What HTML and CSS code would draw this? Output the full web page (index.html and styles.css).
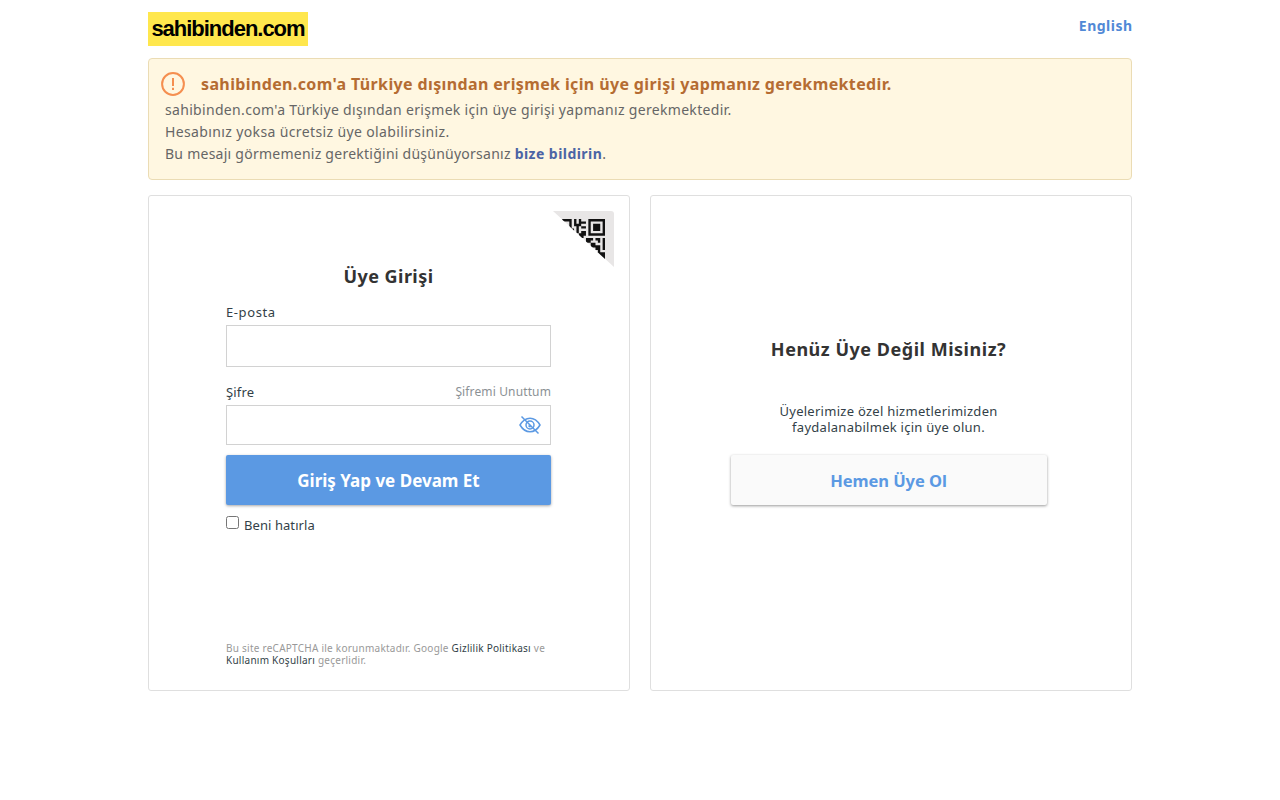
FILE: index.html
```html
<!DOCTYPE html>
<html lang="tr">
<head>
<meta charset="utf-8">
<title>sahibinden.com - Üye Girişi</title>
<link rel="stylesheet" href="styles.css">
</head>
<body>
<div class="page">
  <header class="header">
    <a class="logo"><span class="logo-text">sahibinden.com</span></a>
    <a class="language">English</a>
  </header>
  <section class="notice">
    <div class="notice-head">
      <svg class="notice-icon" width="24" height="24" viewBox="0 0 24 24" fill="none" stroke="#f58f50" stroke-width="2"><circle cx="12" cy="12" r="10.9"/><path d="M12 6v8M12 15.700v2.200"/></svg>
      <h1 class="notice-title">sahibinden.com'a Türkiye dışından erişmek için üye girişi yapmanız gerekmektedir.</h1>
    </div>
    <p class="notice-line first">sahibinden.com'a Türkiye dışından erişmek için üye girişi yapmanız gerekmektedir.</p>
    <p class="notice-line second">Hesabınız yoksa ücretsiz üye olabilirsiniz.</p>
    <p class="notice-line third">Bu mesajı görmemeniz gerektiğini düşünüyorsanız <a class="report">bize bildirin</a>.</p>
  </section>
  <main class="panels">
    <section class="panel login">
      <svg class="qr" width="61" height="56" viewBox="0 0 61 56">
        <defs><clipPath id="fold"><path d="M0 0H58Q61 0 61 3V56Z"/></clipPath><clipPath id="code"><path d="M8.500 8H52V48Z"/></clipPath></defs>
        <path clip-path="url(#fold)" fill="#e8e6e6" d="M0 0H61V56H0Z"/>
        <g clip-path="url(#code)">
          <g transform="translate(9.160 8) scale(2.380)" fill="#111">
            <path fill-rule="evenodd" d="M11 0h7v7h-7zM12 1v5h5v-5zM13 2h3v3h-3z"/>
            <path d="M0 0h4v5h-1v-4h-3zM5 0h1v2h1v-2h1v1h2v1h-2v1h-1v3h-1v-3h-1zM8 3h2v1h-2zM4 4h1v2h-1zM7 6h1v-1h2v2h-1v1h-2zM10 8h3v1h-1v1h-2zM14 8h2v2h-1v-1h-1zM17 8h1v5h-1zM12 10h2v1h2v2h-2v-1h-2zM15 13h1v1h2v4h-1v-2h-1v1h-2v-3h1z"/>
          </g>
        </g>
      </svg>
      <form class="login-form">
        <h2 class="title login-title">Üye Girişi</h2>
        <label class="label email-label" for="email">E-posta</label>
        <input class="field email" id="email" type="text">
        <div class="label-row"><label class="label" for="password">Şifre</label><a class="forgot">Şifremi Unuttum</a></div>
        <div class="password-row">
          <input class="field password" id="password" type="password">
          <svg class="eye" width="22" height="20" viewBox="0 0 22 20" fill="none" stroke="#5b99e3" stroke-width="1.500"><path d="M1 10Q5 3.200 11 3.200T21 10Q17 16.800 11 16.800T1 10Z"/><circle cx="11" cy="10" r="4"/><path d="M9.800 10.500q.2 1.400 1.700 1.100M2.500 1.500l17 17"/></svg>
        </div>
        <button class="submit" type="button">Giriş Yap ve Devam Et</button>
        <label class="remember"><input class="check" type="checkbox"><span>Beni hatırla</span></label>
        <p class="legal">Bu site reCAPTCHA ile korunmaktadır. Google <a class="legal-link">Gizlilik Politikası</a> ve<br><a class="legal-link">Kullanım Koşulları</a> geçerlidir.</p>
      </form>
    </section>
    <section class="panel join">
      <h2 class="title join-title">Henüz Üye Değil Misiniz?</h2>
      <p class="join-text">Üyelerimize özel hizmetlerimizden<br>faydalanabilmek için üye olun.</p>
      <a class="join-button">Hemen Üye Ol</a>
    </section>
  </main>
</div>
</body>
</html>
```

FILE: styles.css
```css
* { box-sizing: border-box; }
body { margin: 0; background: #fff; color: #333f48; font-family: "Lucida Grande", "Noto Sans", sans-serif; font-size: 13px; }
h1, h2, p { margin: 0; }
.page { width: 984px; margin: 0 auto; padding-top: 12px; }
.header { display: flex; justify-content: space-between; height: 46px; }
.logo { display: flex; justify-content: center; align-items: center; width: 160px; height: 34px; background: #ffe74d; }
.logo-text { font: bold 22px/34px "Liberation Sans", sans-serif; color: #000; letter-spacing: -1.02px; white-space: nowrap; }
.language { color: #5189d6; font-size: 14px; font-weight: bold; line-height: 28px; letter-spacing: 0.48px; margin-right: -0.5px; }
.notice { height: 122px; padding: 12px 12px 0; border: 1px solid #ebdcb4; border-radius: 4px; background: #fff7e1; color: #666; }
.notice-head { display: flex; align-items: center; gap: 16px; height: 26px; margin-bottom: 2px; }
.notice-title { color: #b56c32; font-size: 16px; line-height: 26px; letter-spacing: 0.37px; white-space: nowrap; }
.notice-line { padding-left: 4px; font-size: 14px; line-height: 22px; white-space: nowrap; }
.first { letter-spacing: 0.32px; }
.second { letter-spacing: 0.37px; }
.third { letter-spacing: 0.25px; }
.report { color: #4b64a5; font-weight: bold; letter-spacing: 0.45px; }
.panels { display: grid; grid-template-columns: 1fr 1fr; gap: 20px; margin-top: 15px; }
.panel { position: relative; height: 496px; border: 1px solid #dfdfdf; border-radius: 3px; }
.qr { position: absolute; top: 15px; right: 15px; }
.login-form { display: flex; flex-direction: column; width: 325px; margin-left: 77px; padding-top: 66px; }
.title { color: #333; font-size: 18px; line-height: 28px; text-align: center; white-space: nowrap; }
.login-title { letter-spacing: 0.45px; }
.join-title { letter-spacing: 0.52px; }
.label { font-size: 13px; line-height: 20px; letter-spacing: 0.15px; }
.email-label { margin-top: 12px; letter-spacing: 0.6px; }
.field { display: block; width: 100%; border: 1px solid #d2d2d2; background: #fff; padding: 0 10px; }
.email { height: 42px; margin-top: 3px; }
.label-row { display: flex; justify-content: space-between; margin-top: 15px; }
.forgot { color: #8b9195; font-size: 12px; line-height: 20px; letter-spacing: 0.13px; }
.password-row { position: relative; margin-top: 3px; }
.password { height: 40px; }
.eye { position: absolute; right: 10px; top: 10px; }
.submit { height: 50px; margin-top: 10px; border: 0; border-radius: 2px; background: #5b99e3; box-shadow: 0 1px 3px rgba(0,0,0,.35); color: #fff; font: bold 17px "Lucida Grande", "Noto Sans", sans-serif; }
.remember { display: flex; align-items: flex-start; gap: 5px; margin-top: 10px; line-height: 20px; letter-spacing: 0.07px; }
.check { width: 13px; height: 13px; margin: 1px 0 0; }
.legal { margin-top: 107px; color: #999; font-size: 10px; line-height: 12px; letter-spacing: 0.25px; white-space: nowrap; }
.legal-link { color: #333f48; }
.join { display: flex; flex-direction: column; align-items: center; padding: 139px 5px 0 0; }
.join-text { margin-top: 40px; line-height: 16px; letter-spacing: 0.27px; text-align: center; }
.join-button { display: flex; align-items: center; justify-content: center; width: 316px; height: 50px; margin-top: 20px; border-radius: 2px; background: #fafafa; box-shadow: 0 1px 3px rgba(0,0,0,.4); color: #5b99e3; font-size: 16.5px; font-weight: bold; letter-spacing: -0.08px; }
```
